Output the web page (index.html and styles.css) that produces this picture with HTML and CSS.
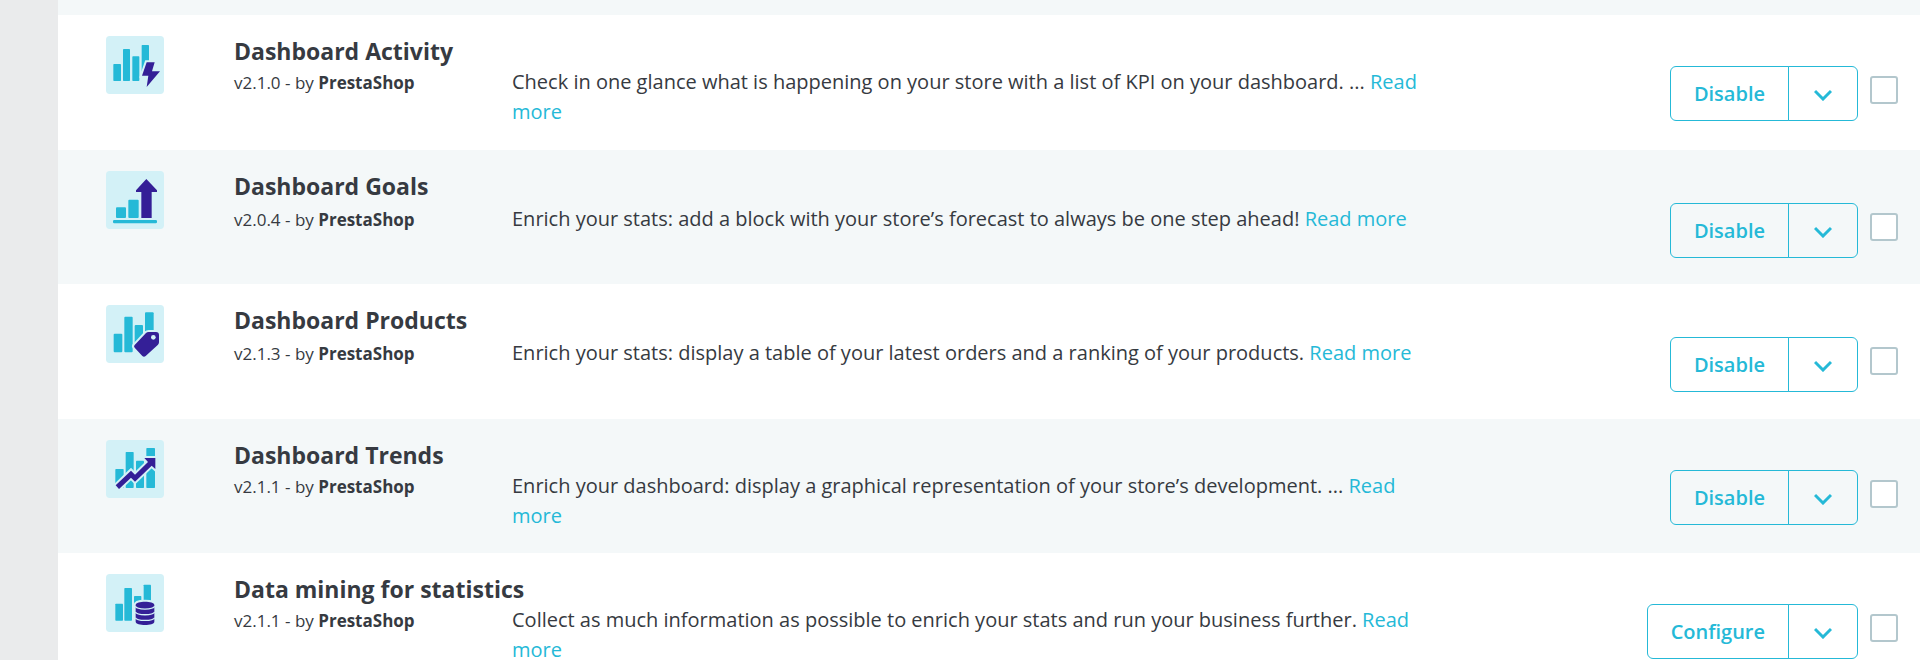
FILE: index.html
```html
<!DOCTYPE html>
<html lang="en">
<head>
    <meta charset="UTF-8">
    <meta name="viewport" content="width=device-width, initial-scale=1">
    <title>Module manager</title>
    <link rel="stylesheet" href="styles.css">
</head>
<body>
    <main class="module-list">
        <article class="module-item">
            <svg class="module-logo" viewBox="48 48 174 174" aria-hidden="true">
                <rect class="logo-bg" x="48" y="48" width="174" height="174" rx="11"/>
                <g class="logo-bar">
                    <rect x="70" y="132" width="23" height="51" rx="2"/>
                    <rect x="99" y="87" width="21" height="96" rx="2"/>
                    <rect x="127" y="109" width="21" height="74" rx="2"/>
                    <rect x="155" y="75" width="22" height="80" rx="2"/>
                </g>
                <path class="logo-shape outlined" d="M170 127h24l-8 27h24l-40 47 5-34h-19z"/>
            </svg>
            <div class="module-body">
                <h3 class="module-name">Dashboard Activity</h3>
                <p class="module-version">v2.1.0 - by <b>PrestaShop</b></p>
                <p class="module-desc">Check in one glance what is happening on your store with a list of KPI on your dashboard. ... <a href="#">Read more</a></p>
                <div class="module-actions">
                    <div class="btn-group">
                        <button type="button" class="btn">Disable</button>
                        <button type="button" class="btn btn-toggle" aria-label="More actions"><svg viewBox="0 0 18 12"><path d="M1 2l8 8 8-8"/></svg></button>
                    </div>
                    <input type="checkbox" class="module-check" aria-label="Select Dashboard Activity">
                </div>
            </div>
        </article>

        <article class="module-item single-line">
            <svg class="module-logo" viewBox="48 48 174 174" aria-hidden="true">
                <rect class="logo-bg" x="48" y="48" width="174" height="174" rx="11"/>
                <g class="logo-bar">
                    <rect x="78" y="157" width="30" height="32" rx="3"/>
                    <rect x="115" y="134" width="31" height="55" rx="3"/>
                    <rect x="69" y="195" width="132" height="10" rx="4"/>
                </g>
                <path class="logo-shape" d="M169 72l32 34v5h-16v78h-31v-78h-16v-5z"/>
            </svg>
            <div class="module-body">
                <h3 class="module-name">Dashboard Goals</h3>
                <p class="module-version">v2.0.4 - by <b>PrestaShop</b></p>
                <p class="module-desc">Enrich your stats: add a block with your store’s forecast to always be one step ahead! <a href="#">Read more</a></p>
                <div class="module-actions">
                    <div class="btn-group">
                        <button type="button" class="btn">Disable</button>
                        <button type="button" class="btn btn-toggle" aria-label="More actions"><svg viewBox="0 0 18 12"><path d="M1 2l8 8 8-8"/></svg></button>
                    </div>
                    <input type="checkbox" class="module-check" aria-label="Select Dashboard Goals">
                </div>
            </div>
        </article>

        <article class="module-item single-line">
            <svg class="module-logo" viewBox="48 48 174 174" aria-hidden="true">
                <rect class="logo-bg" x="48" y="48" width="174" height="174" rx="11"/>
                <g class="logo-bar">
                    <rect x="71" y="134" width="26" height="56" rx="3"/>
                    <rect x="103" y="83" width="25" height="107" rx="3"/>
                    <rect x="134" y="108" width="25" height="60" rx="3"/>
                    <rect x="165" y="70" width="26" height="60" rx="3"/>
                </g>
                <path class="logo-shape outlined" d="M176 129h22q9 0 9 9v22q0 4-3 7l-37 34q-5 5-10 0l-23-25q-4-4 0-8l34-36q3-3 8-3z"/>
                <circle class="logo-bg" cx="190" cy="145" r="7"/>
            </svg>
            <div class="module-body">
                <h3 class="module-name">Dashboard Products</h3>
                <p class="module-version">v2.1.3 - by <b>PrestaShop</b></p>
                <p class="module-desc">Enrich your stats: display a table of your latest orders and a ranking of your products. <a href="#">Read more</a></p>
                <div class="module-actions">
                    <div class="btn-group">
                        <button type="button" class="btn">Disable</button>
                        <button type="button" class="btn btn-toggle" aria-label="More actions"><svg viewBox="0 0 18 12"><path d="M1 2l8 8 8-8"/></svg></button>
                    </div>
                    <input type="checkbox" class="module-check" aria-label="Select Dashboard Products">
                </div>
            </div>
        </article>

        <article class="module-item">
            <svg class="module-logo" viewBox="48 45 174 174" aria-hidden="true">
                <rect class="logo-bg" x="48" y="45" width="174" height="174" rx="11"/>
                <g class="logo-bar">
                    <rect x="76" y="132" width="25" height="57" rx="2"/>
                    <rect x="107" y="81" width="24" height="108" rx="2"/>
                    <rect x="138" y="107" width="24" height="82" rx="2"/>
                    <rect x="169" y="69" width="26" height="120" rx="2"/>
                </g>
                <path class="logo-shape outlined" d="M163 99h33v33l-11-10-50 48-12-12-36 34-10-11 46-44 12 12 39-38z"/>
            </svg>
            <div class="module-body">
                <h3 class="module-name">Dashboard Trends</h3>
                <p class="module-version">v2.1.1 - by <b>PrestaShop</b></p>
                <p class="module-desc">Enrich your dashboard: display a graphical representation of your store’s development. ... <a href="#">Read more</a></p>
                <div class="module-actions">
                    <div class="btn-group">
                        <button type="button" class="btn">Disable</button>
                        <button type="button" class="btn btn-toggle" aria-label="More actions"><svg viewBox="0 0 18 12"><path d="M1 2l8 8 8-8"/></svg></button>
                    </div>
                    <input type="checkbox" class="module-check" aria-label="Select Dashboard Trends">
                </div>
            </div>
        </article>

        <article class="module-item">
            <svg class="module-logo" viewBox="48 45 174 174" aria-hidden="true">
                <rect class="logo-bg" x="48" y="45" width="174" height="174" rx="11"/>
                <g class="logo-bar">
                    <rect x="76" y="134" width="23" height="51" rx="2"/>
                    <rect x="103" y="87" width="23" height="98" rx="2"/>
                    <rect x="132" y="111" width="22" height="40" rx="2"/>
                    <rect x="161" y="77" width="22" height="60" rx="2"/>
                </g>
                <path class="logo-shape outlined" d="M137 138c0-13 56-13 56 0v50c0 13-56 13-56 0z"/>
                <path class="logo-line" d="M136 142c5 11 53 11 58 0M136 159c5 11 53 11 58 0M136 176c5 11 53 11 58 0"/>
            </svg>
            <div class="module-body">
                <h3 class="module-name">Data mining for statistics</h3>
                <p class="module-version">v2.1.1 - by <b>PrestaShop</b></p>
                <p class="module-desc">Collect as much information as possible to enrich your stats and run your business further. <a href="#">Read more</a></p>
                <div class="module-actions">
                    <div class="btn-group">
                        <button type="button" class="btn">Configure</button>
                        <button type="button" class="btn btn-toggle" aria-label="More actions"><svg viewBox="0 0 18 12"><path d="M1 2l8 8 8-8"/></svg></button>
                    </div>
                    <input type="checkbox" class="module-check" aria-label="Select Data mining for statistics">
                </div>
            </div>
        </article>
    </main>
</body>
</html>
```

FILE: styles.css
```css
body {
    margin: 0;
    padding-left: 58px;
    background: #eaebec;
    color: #363a41;
    font-family: "Open Sans", sans-serif;
    font-size: 20px;
    line-height: 30px;
}

h3,
p {
    margin: 0;
}

a {
    color: #25b9d7;
    text-decoration: none;
}

.module-list {
    padding-top: 15px;
    background: #f4f8f9;
}

.module-item {
    display: flex;
    gap: 70px;
    box-sizing: border-box;
    min-height: 135px;
    padding: 21px 22px 13px 48px;
    background: #fff;
}

.module-item:nth-child(even) {
    min-height: 134px;
    background: #f4f8f9;
}

.module-logo {
    flex: none;
    width: 58px;
    height: 58px;
}

.logo-bg {
    fill: #d3f1f7;
}

.logo-bar {
    fill: #25b9d7;
}

.logo-shape {
    fill: #341f97;
}

.outlined {
    stroke: #d3f1f7;
    stroke-width: 12px;
    paint-order: stroke;
}

.logo-line {
    fill: none;
    stroke: #d3f1f7;
    stroke-width: 4px;
}

.module-body {
    flex: 1;
    display: grid;
    grid-template-columns: 278px 10fr 5fr;
    grid-template-rows: 30px auto;
    align-items: first baseline;
}

.single-line .module-body {
    row-gap: 2px;
}

.module-name {
    grid-column: 1 / -1;
    font-size: 23px;
    font-weight: 700;
}

.module-version,
.module-desc {
    padding-top: 1px;
}

.module-version {
    font-size: 17px;
}

.module-actions {
    display: flex;
    align-self: start;
    align-items: flex-start;
    justify-content: flex-end;
    gap: 12px;
}

.btn-group {
    display: flex;
}

.btn {
    height: 55px;
    padding: 0 23px;
    border: 1px solid #25b9d7;
    border-radius: 6px 0 0 6px;
    background: transparent;
    color: #25b9d7;
    font-family: inherit;
    font-size: 20px;
    font-weight: 600;
    cursor: pointer;
}

.btn-toggle {
    width: 70px;
    margin-left: -1px;
    border-radius: 0 6px 6px 0;
}

.btn-toggle svg {
    width: 18px;
    height: 12px;
    fill: none;
    stroke: #25b9d7;
    stroke-width: 3px;
}

.module-check {
    appearance: none;
    box-sizing: border-box;
    width: 28px;
    height: 28px;
    margin: 10px 0 0;
    border: 2px solid #b3c7cd;
    border-radius: 3px;
    background: #fff;
}

.module-check:checked {
    background: #25b9d7;
}
```
